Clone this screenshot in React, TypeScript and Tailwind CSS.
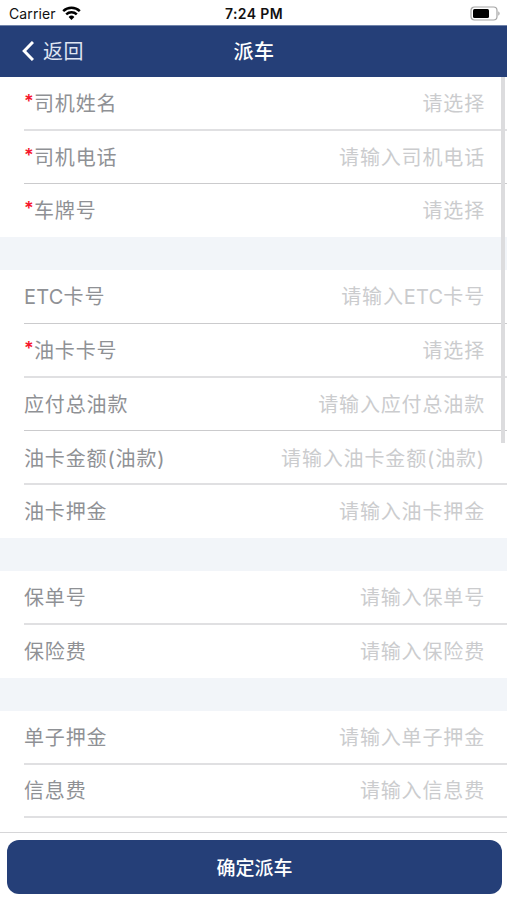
type Row = { label: string; hint: string; required?: boolean; h: string; line?: string };

const thin = "h-px bg-[#cbcbcd]";
const soft = "h-[2px] bg-[#e0e0e2]";

const groups: Row[][] = [
  [
    { label: "司机姓名", hint: "请选择", required: true, h: "h-[54px] pt-[2px]", line: soft },
    { label: "司机电话", hint: "请输入司机电话", required: true, h: "h-[53px] pt-[2px]", line: thin },
    { label: "车牌号", hint: "请选择", required: true, h: "h-[53px] pt-px" },
  ],
  [
    { label: "ETC卡号", hint: "请输入ETC卡号", h: "h-[54px]", line: thin },
    { label: "油卡卡号", hint: "请选择", required: true, h: "h-[54px] pt-[2px]", line: soft },
    { label: "应付总油款", hint: "请输入应付总油款", h: "h-[53px] pt-[2px]", line: thin },
    { label: "油卡金额(油款)", hint: "请输入油卡金额(油款)", h: "h-[54px] pt-[3px]", line: soft },
    { label: "油卡押金", hint: "请输入油卡押金", h: "h-[53px]" },
  ],
  [
    { label: "保单号", hint: "请输入保单号", h: "h-[54px] pt-[2px]", line: soft },
    { label: "保险费", hint: "请输入保险费", h: "h-[53px]" },
  ],
  [
    { label: "单子押金", hint: "请输入单子押金", h: "h-[54px] pt-[2px]", line: soft },
    { label: "信息费", hint: "请输入信息费", h: "h-[53px] pt-px", line: soft },
  ],
];

// Latin capitals are set a little tighter than the Chinese characters around them.
function Label({ text }: { text: string }) {
  return (
    <span>
      {text.split(/(ETC)/).map((part, i) =>
        part === "ETC" ? (
          <span key={i} className="tracking-[0.2px]">
            {part}
          </span>
        ) : (
          part
        ),
      )}
    </span>
  );
}

function Field({ row }: { row: Row }) {
  return (
    <div className={`ml-6 flex flex-col ${row.h}`}>
      <div className="flex min-h-0 flex-1 items-center justify-between pr-[22px] text-[20px] leading-none tracking-[0.85px] whitespace-nowrap">
        <span className="flex items-center text-[#8f9195]">
          {row.required && (
            <span className="-mt-[4px] w-[10px] text-[18px] leading-none font-semibold text-[#f5152b]">*</span>
          )}
          <Label text={row.label} />
        </span>
        <span className="text-[#cbccce]">
          <Label text={row.hint} />
        </span>
      </div>
      {row.line && <div className={`shrink-0 ${row.line}`} />}
    </div>
  );
}

export default function App() {
  return (
    <div className="flex h-[900px] w-[507px] flex-col overflow-hidden bg-white font-['Inter','Noto_Sans_CJK_SC',sans-serif]">
      <div className="grid h-[25px] shrink-0 grid-cols-3 items-center pr-[6px] pl-[9px] text-[14px] leading-none text-[#111]">
        <div className="flex items-center gap-[6px] pt-[3px]">
          <span className="tracking-[0.1px]">Carrier</span>
          <svg className="-mt-[2px]" width="19" height="14" viewBox="0 0 19 14" fill="none" stroke="#000" strokeWidth="2.5">
            <path d="M1.2 5.1a12 12 0 0 1 16.6 0M4.2 8.4a7.7 7.7 0 0 1 10.6 0" />
            <path d="M9.5 14 6.6 11a4.1 4.1 0 0 1 5.8 0z" fill="#000" stroke="none" />
          </svg>
        </div>
        <span className="-ml-[2px] pt-[3px] text-center font-semibold tracking-[0.4px]">7:24 PM</span>
        <svg className="mt-[2px] justify-self-end" width="31" height="15" viewBox="0 0 31 15">
          <rect x="1" y="1" width="26" height="13" rx="3.5" fill="none" stroke="#a5a5a5" strokeWidth="1.2" />
          <rect x="3" y="3" width="16" height="9" rx="1.5" fill="#000" />
          <path d="M28.3 5.3v4.4c1.8-.8 1.8-3.6 0-4.4z" fill="#a5a5a5" />
        </svg>
      </div>

      <header className="grid h-[52px] shrink-0 grid-cols-3 items-center border-t border-[#7184aa] bg-[#253f78] text-[20px] leading-none">
        <div className="flex items-center gap-[9px] pl-[22px] text-[#dfe5f2]">
          <svg className="-mt-[2px]" width="12" height="20" viewBox="0 0 12 20" fill="none" stroke="#fff" strokeWidth="3">
            <path d="M11 1 2.2 10 11 19" />
          </svg>
          <span className="tracking-[0.4px]">返回</span>
        </div>
        <span className="pl-px text-center font-medium tracking-[0.4px] text-white">派车</span>
      </header>

      <main className="relative h-[755px] shrink-0 overflow-hidden bg-[#f2f5f9]">
        <div className="flex flex-col gap-[33px]">
          {groups.map((rows, i) => (
            <section key={i} className="bg-white last:pb-4">
              {rows.map((row) => (
                <Field key={row.label} row={row} />
              ))}
            </section>
          ))}
        </div>
        <div className="absolute top-0 right-[2px] h-[366px] w-[4px] bg-[#dcdcde]" />
      </main>

      <footer className="flex-1 border-t border-[#d6d6d8] pt-[7px] pr-[5px] pl-[7px]">
        <button className="flex h-[54px] w-full items-center justify-center rounded-[12px] bg-[#253f78] pt-[2px] text-[19px] leading-none font-medium text-white">
          确定派车
        </button>
      </footer>
    </div>
  );
}
